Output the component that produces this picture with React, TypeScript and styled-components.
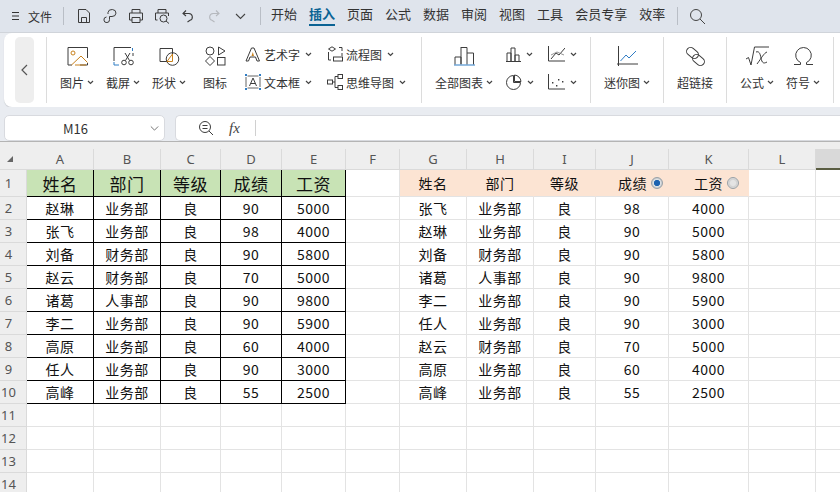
import React from 'react';
import styled, { createGlobalStyle } from 'styled-components';

const GlobalStyle = createGlobalStyle`
  html, body {
    margin: 0;
    height: 100%;
    overflow: hidden;
    background: #fff;
  }
  body {
    font-family: "Noto Sans CJK SC", "Liberation Sans", sans-serif;
    color: #333;
  }
`;

const Page = styled.div`
  width: 840px;
  height: 492px;
  overflow: hidden;
  display: flex;
  flex-direction: column;
`;

/* top tab bar */
const TopBar = styled.div`
  height: 33px;
  box-sizing: border-box;
  flex: none;
  background: #dfe4ec;
  border-bottom: 1px solid #d0d4da;
  display: flex;
  align-items: center;
  padding-left: 11px;
  font-size: 13px;
`;

const FileBtn = styled.div`
  display: flex;
  align-items: center;
  gap: 8px;
  font-size: 12px;
  width: 52px;
  flex: none;
`;

const BarSep = styled.div<{ $left: number; $right: number }>`
  width: 1px;
  height: 18px;
  flex: none;
  background: #b9bec6;
  margin: 0 ${(p) => p.$right}px 0 ${(p) => p.$left}px;
`;

const QuickBtn = styled.div`
  width: 26px;
  flex: none;
  display: flex;
  justify-content: center;
  align-items: center;
`;

const TabList = styled.div`
  display: flex;
  gap: 12px;
`;

const Tab = styled.div<{ $active?: boolean }>`
  height: 32px;
  line-height: 28px;
  white-space: nowrap;
  box-sizing: border-box;
  color: ${(p) => (p.$active ? '#0b6394' : '#333')};
  font-weight: ${(p) => (p.$active ? 700 : 400)};
  padding-bottom: 3px;
  position: relative;
  &::after {
    content: '';
    display: ${(p) => (p.$active ? 'block' : 'none')};
    position: absolute;
    left: 0;
    right: 0;
    bottom: 6px;
    height: 2px;
    background: #0b6394;
  }
`;

/* ribbon */
const RibbonBand = styled.div`
  flex: none;
  height: 74px;
  background: #e9ecf1;
  padding-left: 4px;
  box-sizing: border-box;
`;

const Ribbon = styled.div`
  height: 74px;
  background: #fff;
  border-radius: 8px 0 0 8px;
  box-shadow: 0 1px 1px #c9ccd1;
  display: flex;
  align-items: center;
`;

const BackBtn = styled.div`
  width: 19px;
  height: 66px;
  flex: none;
  margin: 0 12px 0 11px;
  background: #eeeeee;
  border-radius: 5px;
  display: flex;
  align-items: center;
  justify-content: center;
`;

const RibbonSep = styled.div`
  width: 1px;
  height: 66px;
  flex: none;
  background: #dcdcdc;
`;

const Group = styled.div<{ $pad?: number; $width: number }>`
  box-sizing: border-box;
  width: ${(p) => p.$width}px;
  height: 66px;
  flex: none;
  display: flex;
  padding-left: ${(p) => p.$pad ?? 0}px;
`;

const LargeItem = styled.div<{ $width: number }>`
  width: ${(p) => p.$width}px;
  flex: none;
  display: flex;
  flex-direction: column;
  align-items: center;
`;

const LargeIcon = styled.div`
  height: 28px;
  margin-top: 5px;
  display: flex;
  align-items: center;
  justify-content: center;
`;

const LargeLabel = styled.div`
  height: 26px;
  line-height: 26px;
  font-size: 12px;
  white-space: nowrap;
  display: flex;
  align-items: center;
  gap: 1px;
  padding-bottom: 1px;
  box-sizing: border-box;
`;

const SmallGrid = styled.div<{ $cols: string; $left?: number }>`
  display: grid;
  grid-template-columns: ${(p) => p.$cols};
  grid-auto-rows: 28px;
  margin-top: 3px;
  margin-left: ${(p) => p.$left ?? 0}px;
`;

const SmallItem = styled.div`
  display: flex;
  align-items: center;
  font-size: 12px;
  white-space: nowrap;
  gap: 3px;
`;

const Caret = styled.svg.attrs({ viewBox: '0 0 7 5', width: 7, height: 5 })`
  flex: none;
  margin-left: 2px;
`;

const CaretIcon = () => (
  <Caret>
    <path d="M1 1 L3.5 3.5 L6 1" fill="none" stroke="#444" strokeWidth="1.2" />
  </Caret>
);

/* formula bar */
const FormulaBand = styled.div`
  flex: none;
  height: 35px;
  background: #e9ecf1;
  border-bottom: 1px solid #b4b4b4;
  box-sizing: border-box;
  display: flex;
  padding: 8px 0 0 4px;
  gap: 10px;
`;

const NameBox = styled.div`
  width: 161px;
  height: 26px;
  flex: none;
  box-sizing: border-box;
  background: #fff;
  border: 1px solid #d8dadf;
  border-radius: 5px;
  display: flex;
  align-items: center;
  font-size: 13px;
  padding: 0 5px 0 58px;
  justify-content: space-between;
`;

const FormulaBox = styled.div`
  flex: 1;
  height: 26px;
  box-sizing: border-box;
  background: #fff;
  border: 1px solid #d8dadf;
  border-right: none;
  border-radius: 5px 0 0 5px;
  display: flex;
  align-items: center;
  padding-left: 22px;
`;

const FxText = styled.span`
  font-family: "Liberation Serif", serif;
  font-style: italic;
  font-size: 15px;
  margin-left: 15px;
  width: 26px;
  color: #444;
`;

const FormulaDivider = styled.div`
  width: 1px;
  height: 16px;
  background: #d0d0d0;
`;

const SheetGap = styled.div`
  height: 7px;
  flex: none;
  background: #eeeeee;
`;

/* sheet */
const Sheet = styled.div`
  display: grid;
  grid-template-columns: 27px 67px 67px 60px 61px 64px 54px 67px 67px 62px 73px 80px 67px 25px;
  grid-template-rows: 21px 27px;
  grid-auto-rows: 23px;
  flex: none;
`;

const Corner = styled.div`
  background: #eeeeee;
  border-bottom: 1px solid #dadada;
  box-sizing: border-box;
  display: flex;
  align-items: flex-end;
  padding: 0 0 7px 7px;
`;

const ColHead = styled.div<{ $selected?: boolean }>`
  box-sizing: border-box;
  background: ${(p) => (p.$selected ? '#d9d9d9' : '#eeeeee')};
  border-right: 1px solid #dadada;
  border-bottom: ${(p) => (p.$selected ? '2px solid #5a5d42' : '1px solid #dadada')};
  color: #555;
  font-size: 13px;
  display: flex;
  align-items: center;
  justify-content: center;
  font-family: "Noto Sans", sans-serif;
`;

const RowHead = styled.div`
  box-sizing: border-box;
  background: #eeeeee;
  border-right: 1px solid #dadada;
  border-bottom: 1px solid #dadada;
  color: #555;
  font-size: 13px;
  width: 27px;
  padding-right: 9px;
  display: flex;
  align-items: center;
  justify-content: center;
  font-family: "Noto Sans", sans-serif;
`;

type CellKind = 'plain' | 'boxed' | 'boxedHead' | 'peach';

const Cell = styled.div<{ $kind: CellKind; $padRight?: number }>`
  box-sizing: border-box;
  display: flex;
  align-items: center;
  justify-content: ${(p) => (p.$padRight ? 'flex-end' : 'center')};
  padding-right: ${(p) => p.$padRight ?? 0}px;
  color: #111;
  white-space: nowrap;
  font-size: ${(p) => (p.$kind === 'boxedHead' ? 17 : 14)}px;
  letter-spacing: ${(p) => (p.$kind === 'boxedHead' ? '0.6px' : '0.5px')};
  background: ${(p) =>
    p.$kind === 'boxedHead' ? '#c8e3b5' : p.$kind === 'peach' ? '#fce4d3' : '#fff'};
  border-right: 1px solid
    ${(p) =>
      p.$kind === 'boxed' || p.$kind === 'boxedHead'
        ? '#000'
        : p.$kind === 'peach'
          ? '#fce4d3'
          : '#e3e3e3'};
  border-bottom: 1px solid
    ${(p) => (p.$kind === 'boxed' || p.$kind === 'boxedHead' ? '#000' : '#e3e3e3')};
`;

const Radio = styled.span<{ $on?: boolean }>`
  width: 12px;
  height: 12px;
  margin-left: 4px;
  flex: none;
  border-radius: 50%;
  box-sizing: border-box;
  border: 1px solid #98a0a6;
  background: ${(p) =>
    p.$on
      ? 'radial-gradient(circle, #1c62b0 0 2.8px, #dfe3e6 3.4px, #c3c8cc 5px)'
      : 'radial-gradient(circle, #e4e4e4 0 2.5px, #cfcfcf 4px, #e8e8e8 5.5px)'};
`;

/* ---------- icons ---------- */
const ST = { fill: 'none', stroke: '#3c3c3c', strokeWidth: 1 };
const OR = { fill: 'none', stroke: '#c9821e', strokeWidth: 1 };
const BL = { fill: 'none', stroke: '#2f7cc4', strokeWidth: 1 };

const Ic = ({ w, h, children }: { w: number; h: number; children: React.ReactNode }) => (
  <svg width={w} height={h} viewBox={`0 0 ${w} ${h}`}>
    {children}
  </svg>
);

const MenuIcon = () => (
  <Ic w={9} h={10}>
    <path d="M1 1.5H8M1 5H8M1 8.5H8" stroke="#333" strokeWidth="1" />
  </Ic>
);

const SaveIcon = () => (
  <Ic w={16} h={16}>
    <path d="M2.5 1.5H10L13.5 5V14.5H2.5ZM5.5 14.5V9.5H10.5V14.5" {...ST} />
  </Ic>
);
const ClipIcon = () => (
  <Ic w={16} h={16}>
    <path d="M6 6V4.5A4 3.5 0 1 1 10 8.5H7.5V11.5A2.8 2.8 0 1 1 4.5 9" {...ST} />
  </Ic>
);
const PrintIcon = () => (
  <Ic w={16} h={16}>
    <path d="M4 5V1.5H12V5M4 12H1.5V5H14.5V12H12M4 9.5H12V14.5H4Z" {...ST} />
  </Ic>
);
const PreviewIcon = () => (
  <Ic w={16} h={16}>
    <path d="M4 5V1.5H12V5M3.5 12H1.5V5H14.5V8" {...ST} />
    <circle cx="9.5" cy="10.5" r="3.5" {...ST} />
    <path d="M12 13L15 15.5" {...ST} />
  </Ic>
);
const UndoIcon = () => (
  <Ic w={14} h={14}>
    <path d="M5 1.5L2 4.5L5 7M2.5 4.5H8A3.5 3.5 0 0 1 9 11.3L6.5 13" fill="none" stroke="#3c3c3c" strokeWidth="1.1" />
  </Ic>
);
const RedoIcon = () => (
  <Ic w={14} h={14}>
    <path d="M9 1.5L12 4.5L9 7M11.5 4.5H6A3.5 3.5 0 0 0 5 11.3L7.5 13" fill="none" stroke="#b5b8bd" strokeWidth="1.1" />
  </Ic>
);
const ChevronDown = ({ color = '#444', w = 11 }: { color?: string; w?: number }) => (
  <svg width={w} height={7} viewBox="0 0 11 7">
    <path d="M1 1L5.5 5.5L10 1" fill="none" stroke={color} strokeWidth="1.1" />
  </svg>
);
const SearchIcon = () => (
  <Ic w={17} h={17}>
    <circle cx="7" cy="7" r="5.5" fill="none" stroke="#444" strokeWidth="1" />
    <path d="M11 11L16 16" stroke="#444" strokeWidth="1" />
  </Ic>
);
const ImageIcon = () => (
  <Ic w={21} h={19}>
    <path d="M5 18H1V.5H20.5V11M20.5 16V18H13" {...ST} />
    <circle cx="6" cy="6" r="2" {...OR} />
    <path d="M4.5 18L14 9L20.5 15.5M8 18H19" {...OR} />
  </Ic>
);
const ShotIcon = () => (
  <Ic w={21} h={19}>
    <path d="M1 14V.5H18" {...ST} />
    <path d="M19.5 1V4" {...BL} />
    <path d="M1 15V18H6" {...BL} />
    <path d="M20 6V9" {...ST} />
    <circle cx="11" cy="15.5" r="2.3" {...ST} />
    <circle cx="18" cy="15.5" r="2.3" {...ST} />
    <path d="M12.5 13.5L17 6M16.5 13.5L12 6" {...ST} />
  </Ic>
);
const ShapeIcon = () => (
  <Ic w={21} h={19}>
    <path d="M8 14.5H1V1.5H13.5V7" {...ST} />
    <circle cx="13.5" cy="12" r="6.3" {...ST} />
    <path d="M8 14.5L13.5 7V14.5Z" fill="#fff" stroke="#c9821e" />
  </Ic>
);
const GlyphIcon = () => (
  <Ic w={21} h={20}>
    <circle cx="5" cy="5" r="4" {...ST} />
    <path d="M13.5 1L20 5L13.5 9Z" {...ST} />
    <path d="M5 10.5L9.5 15L5 19.5L.5 15Z" {...ST} />
    <rect x="12.5" y="11.5" width="7.5" height="7.5" {...ST} />
  </Ic>
);
const ArtIcon = () => (
  <Ic w={16} h={15}>
    <path d="M1 14L6.5 1H9L14.5 14H12L10.5 10H5L3.5 14Z" {...ST} />
    <path d="M6.5 9L7.8 5L9 9Z" fill="#c9821e" />
  </Ic>
);
const TextBoxIcon = () => (
  <Ic w={16} h={16}>
    <path d="M2.5 2H13.5M2.5 14H13.5M1 3V13M15 3V13" fill="none" stroke="#3c3c3c" strokeWidth="0.8" />
    <path d="M4.5 12L8 4L11.5 12M5.8 9.5H10.2" {...ST} />
    <path d="M0 0H2V2H0ZM14 0H16V2H14ZM0 14H2V16H0ZM14 14H16V16H14Z" fill="#2f7cc4" />
  </Ic>
);
const FlowIcon = () => (
  <Ic w={16} h={16}>
    <path d="M5 .8L8.5 3L5 5.2L1.5 3Z M1.5 6V14H4 M12 1.5H15V5 M15 7V10 M1.5 8V10" {...ST} />
    <rect x="6.5" y="11" width="9" height="4" {...ST} />
  </Ic>
);
const MindIcon = () => (
  <Ic w={16} h={16}>
    <rect x="0.5" y="6" width="5" height="4" {...ST} />
    <rect x="11" y="0.5" width="4.5" height="4" {...ST} />
    <rect x="11" y="11.5" width="4.5" height="4" {...ST} />
    <path d="M5.5 8H8V2.5H11M8 8V13.5H11" {...ST} />
  </Ic>
);
const AllChartIcon = () => (
  <Ic w={21} h={20}>
    <path d="M1 18.5V11H7V18.5M7 1.5H13V18.5M13 7H19.5V18.5" {...ST} />
    <path d="M7 1V18" {...ST} />
    <path d="M0 19H21" stroke="#2f7cc4" strokeWidth="1" />
  </Ic>
);
const BarIcon = () => (
  <Ic w={15} h={15}>
    <path d="M1 14V6H5V14M5 14V1H9V14M9 14V8H13V14M0 14.5H15" {...ST} />
  </Ic>
);
const LineChartIcon = () => (
  <Ic w={17} h={16}>
    <path d="M.5 0V15H17" {...ST} />
    <path d="M3 13L8 7L11 9L17 2" {...ST} />
    <path d="M3 9L9 6L16 9" fill="none" stroke="#777" strokeWidth="0.8" />
  </Ic>
);
const PieIcon = () => (
  <Ic w={16} h={16}>
    <path d="M7.5 1.5A7 7 0 1 0 14.5 8.5H7.5Z" {...ST} />
    <path d="M8.5 1A7 7 0 0 1 15 7.5H8.5Z" {...ST} />
  </Ic>
);
const ScatterIcon = () => (
  <Ic w={17} h={16}>
    <path d="M.5 0V15H17" {...ST} />
    <path d="M4 8h1.4v1.4H4zM8 11h1.4v1.4H8zM10 5h1.4v1.4H10zM14 7h1.4v1.4H14z" fill="#3c3c3c" />
  </Ic>
);
const SparkIcon = () => (
  <Ic w={21} h={21}>
    <path d="M1.5 0V20M0 18H21" {...ST} />
    <path d="M3.5 15L9 9L12 12L19 5" {...BL} />
  </Ic>
);
const LinkIcon = () => (
  <Ic w={21} h={21}>
    <rect x="1" y="3" width="13" height="8" rx="4" transform="rotate(40 7.5 7)" {...ST} />
    <rect x="7" y="10" width="13" height="8" rx="4" transform="rotate(40 13.5 14)" {...ST} />
  </Ic>
);
const SqrtIcon = () => (
  <Ic w={23} h={20}>
    <path d="M0 13L2.5 11.5L5 19L8.5 1H23" {...ST} />
    <path d="M10 6C13 5 14 7 15 12C16 17 17.5 18 21 16M21 6C18 7 15.5 12 11 18" {...ST} />
  </Ic>
);
const OmegaIcon = () => (
  <Ic w={21} h={19}>
    <path d="M1 17.5H7.5V15.5A7.8 7.8 0 1 1 13.5 15.5V17.5H20" {...ST} />
  </Ic>
);
const ZoomSearchIcon = () => (
  <Ic w={16} h={16}>
    <circle cx="7" cy="7" r="5.5" {...ST} />
    <path d="M11 11L15 15M4.5 5.5H9.5M4.5 8.5H9.5" {...ST} />
  </Ic>
);

/* ---------- data ---------- */
const colLetters = ['A', 'B', 'C', 'D', 'E', 'F', 'G', 'H', 'I', 'J', 'K', 'L', 'M'];

const leftHead = ['姓名', '部门', '等级', '成绩', '工资'];
const leftRows = [
  ['赵琳', '业务部', '良', '90', '5000'],
  ['张飞', '业务部', '良', '98', '4000'],
  ['刘备', '财务部', '良', '90', '5800'],
  ['赵云', '财务部', '良', '70', '5000'],
  ['诸葛', '人事部', '良', '90', '9800'],
  ['李二', '业务部', '良', '90', '5900'],
  ['高原', '业务部', '良', '60', '4000'],
  ['任人', '业务部', '良', '90', '3000'],
  ['高峰', '业务部', '良', '55', '2500'],
];
const rightRows = [
  ['张飞', '业务部', '良', '98', '4000'],
  ['赵琳', '业务部', '良', '90', '5000'],
  ['刘备', '财务部', '良', '90', '5800'],
  ['诸葛', '人事部', '良', '90', '9800'],
  ['李二', '业务部', '良', '90', '5900'],
  ['任人', '业务部', '良', '90', '3000'],
  ['赵云', '财务部', '良', '70', '5000'],
  ['高原', '业务部', '良', '60', '4000'],
  ['高峰', '业务部', '良', '55', '2500'],
];
const tabs = ['开始', '插入', '页面', '公式', '数据', '审阅', '视图', '工具', '会员专享', '效率'];

function SheetRows() {
  const rows = [];
  for (let r = 1; r <= 14; r++) {
    const i = r - 2;
    const hasData = r >= 2 && r <= 10;
    rows.push(<RowHead key={`h${r}`}>{r}</RowHead>);
    for (let c = 0; c < 5; c++) {
      if (r === 1) rows.push(<Cell key={`l${r}${c}`} $kind="boxedHead">{leftHead[c]}</Cell>);
      else if (hasData) rows.push(<Cell key={`l${r}${c}`} $kind="boxed">{leftRows[i][c]}</Cell>);
      else rows.push(<Cell key={`l${r}${c}`} $kind="plain" />);
    }
    rows.push(<Cell key={`f${r}`} $kind="plain" />);
    for (let c = 0; c < 5; c++) {
      if (r === 1) {
        const radio = c >= 3;
        rows.push(
          <Cell key={`r${r}${c}`} $kind="peach" $padRight={c === 3 ? 5 : c === 4 ? 9 : undefined}>
            {leftHead[c]}
            {radio && <Radio $on={c === 3} />}
          </Cell>,
        );
      } else if (hasData) rows.push(<Cell key={`r${r}${c}`} $kind="plain">{rightRows[i][c]}</Cell>);
      else rows.push(<Cell key={`r${r}${c}`} $kind="plain" />);
    }
    rows.push(<Cell key={`m${r}`} $kind="plain" />);
    rows.push(<Cell key={`n${r}`} $kind="plain" />);
  }
  return <>{rows}</>;
}

export default function App() {
  return (
    <Page>
      <GlobalStyle />
      <TopBar>
        <FileBtn>
          <MenuIcon />
          文件
        </FileBtn>
        <BarSep $left={0} $right={7} />
        <QuickBtn><SaveIcon /></QuickBtn>
        <QuickBtn><ClipIcon /></QuickBtn>
        <QuickBtn><PrintIcon /></QuickBtn>
        <QuickBtn><PreviewIcon /></QuickBtn>
        <QuickBtn><UndoIcon /></QuickBtn>
        <QuickBtn><RedoIcon /></QuickBtn>
        <QuickBtn><ChevronDown /></QuickBtn>
        <BarSep $left={7} $right={10} />
        <TabList>
          {tabs.map((t) => (
            <Tab key={t} $active={t === '插入'}>{t}</Tab>
          ))}
        </TabList>
        <BarSep $left={12} $right={11} />
        <SearchIcon />
      </TopBar>

      <RibbonBand>
        <Ribbon>
          <BackBtn>
            <svg width="7" height="12" viewBox="0 0 7 12">
              <path d="M6 1L1 6L6 11" fill="none" stroke="#555" strokeWidth="1.2" />
            </svg>
          </BackBtn>
          <RibbonSep />
          <Group $width={374} $pad={7}>
            <LargeItem $width={46}>
              <LargeIcon><ImageIcon /></LargeIcon>
              <LargeLabel>图片<CaretIcon /></LargeLabel>
            </LargeItem>
            <LargeItem $width={46}>
              <LargeIcon><ShotIcon /></LargeIcon>
              <LargeLabel>截屏<CaretIcon /></LargeLabel>
            </LargeItem>
            <LargeItem $width={46}>
              <LargeIcon><ShapeIcon /></LargeIcon>
              <LargeLabel>形状<CaretIcon /></LargeLabel>
            </LargeItem>
            <LargeItem $width={46}>
              <LargeIcon><GlyphIcon /></LargeIcon>
              <LargeLabel>图标</LargeLabel>
            </LargeItem>
            <SmallGrid $cols="82px 94px" $left={7}>
              <SmallItem><ArtIcon />艺术字<CaretIcon /></SmallItem>
              <SmallItem><FlowIcon />流程图<CaretIcon /></SmallItem>
              <SmallItem><TextBoxIcon />文本框<CaretIcon /></SmallItem>
              <SmallItem><MindIcon />思维导图<CaretIcon /></SmallItem>
            </SmallGrid>
          </Group>
          <RibbonSep />
          <Group $width={168} $pad={6}>
            <LargeItem $width={72}>
              <LargeIcon><AllChartIcon /></LargeIcon>
              <LargeLabel>全部图表<CaretIcon /></LargeLabel>
            </LargeItem>
            <SmallGrid $cols="42px 42px" $left={6}>
              <SmallItem><BarIcon /><CaretIcon /></SmallItem>
              <SmallItem><LineChartIcon /><CaretIcon /></SmallItem>
              <SmallItem><PieIcon /><CaretIcon /></SmallItem>
              <SmallItem><ScatterIcon /><CaretIcon /></SmallItem>
            </SmallGrid>
          </Group>
          <RibbonSep />
          <Group $width={72}>
            <LargeItem $width={72}>
              <LargeIcon><SparkIcon /></LargeIcon>
              <LargeLabel>迷你图<CaretIcon /></LargeLabel>
            </LargeItem>
          </Group>
          <RibbonSep />
          <Group $width={62}>
            <LargeItem $width={62}>
              <LargeIcon><LinkIcon /></LargeIcon>
              <LargeLabel>超链接</LargeLabel>
            </LargeItem>
          </Group>
          <RibbonSep />
          <Group $width={106} $pad={7}>
            <LargeItem $width={46}>
              <LargeIcon><SqrtIcon /></LargeIcon>
              <LargeLabel>公式<CaretIcon /></LargeLabel>
            </LargeItem>
            <LargeItem $width={46}>
              <LargeIcon><OmegaIcon /></LargeIcon>
              <LargeLabel>符号<CaretIcon /></LargeLabel>
            </LargeItem>
          </Group>
          <RibbonSep />
        </Ribbon>
      </RibbonBand>

      <FormulaBand>
        <NameBox>
          M16
          <ChevronDown color="#666" w={9} />
        </NameBox>
        <FormulaBox>
          <ZoomSearchIcon />
          <FxText>fx</FxText>
          <FormulaDivider />
        </FormulaBox>
      </FormulaBand>
      <SheetGap />

      <Sheet>
        <Corner>
          <svg width="6" height="6" viewBox="0 0 6 6">
            <path d="M6 0V6H0Z" fill="#666" />
          </svg>
        </Corner>
        {colLetters.map((l) => (
          <ColHead key={l} $selected={l === 'M'}>{l === 'M' ? '' : l}</ColHead>
        ))}
        <SheetRows />
      </Sheet>
    </Page>
  );
}
